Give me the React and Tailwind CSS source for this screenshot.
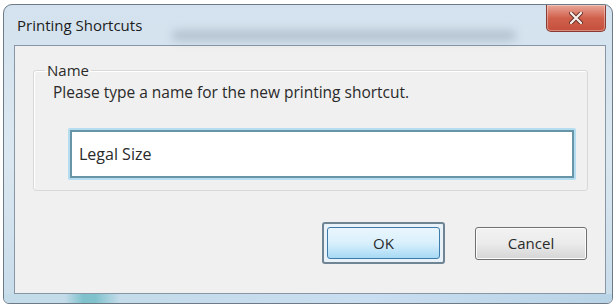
export default function App() {
  return (
    <div className="w-[615px] h-[306px] bg-white pt-[4px] pl-[3px] font-['Open_Sans',sans-serif] text-[#2a2a2a]">
      <div className="w-[610px] h-[300px] rounded-t-[9px] rounded-b-[6px] border border-[#6e7a86] bg-gradient-to-b from-[#d3e2ee] via-[#dce8f1] to-[#c8dcea] flex flex-col overflow-hidden">
        {/* title bar */}
        <div className="h-[40px] flex items-start shrink-0">
          <span className="pl-[13px] pt-[10px] text-[15px] leading-[20px] text-[#1c1c1c]">Printing Shortcuts</span>
          <div className="flex-1 mt-[26px] mx-[30px] h-[9px] rounded-full bg-[#7d8d9b]/45 blur-[5px]" />
          <button className="w-[60px] h-[27px] mr-[6px] rounded-b-[5px] border border-t-0 border-[#8a3a30] bg-gradient-to-b from-[#e8a698] via-[#d0604c] to-[#c4503c] flex items-center justify-center shadow-[inset_0_0_0_1px_rgba(255,255,255,0.35)]">
            <svg width="14" height="12" viewBox="0 0 14 12">
              <path d="M2 1 L12 11 M12 1 L2 11" stroke="#5a2a24" strokeWidth="4" strokeLinecap="round" />
              <path d="M2 1 L12 11 M12 1 L2 11" stroke="#f6ece8" strokeWidth="2.4" strokeLinecap="round" />
            </svg>
          </button>
        </div>

        {/* client area */}
        <div className="h-[249px] ml-[10px] mr-[6px] border border-[#8797a6] bg-[#f0f0f0] flex flex-col shrink-0">
          <fieldset className="ml-[18px] mt-[15px] mr-[17px] h-[130px] border border-[#d8d8d8] rounded-[3px] shadow-[inset_1px_1px_0_#ffffff] px-[19px] min-w-0">
            <legend className="ml-[-8px] px-[2px] text-[15px] leading-[18px]">Name</legend>
            <p className="text-[15.5px] leading-[20px] mt-[3px]">Please type a name for the new printing shortcut.</p>
            <div className="mt-[26px] ml-[15px] mr-[-8px] h-[52px] border-2 border-[#b4def0] rounded-[2px]">
              <div className="h-full border-2 border-[#6794a7] bg-white flex items-center pl-[7px]">
                <span className="text-[16px]">Legal Size</span>
              </div>
            </div>
          </fieldset>

          <div className="mt-[31px] flex justify-end items-center gap-[30px] pr-[18px]">
            <div className="w-[123px] h-[42px] border-2 border-[#6f8593] rounded-[3px] p-[3px] bg-[#e8f2f8]">
              <button className="w-full h-full rounded-[3px] border border-[#3d7bab] bg-gradient-to-b from-[#eaf6fd] via-[#d9f0fc] to-[#a7d9f5] text-[15px] leading-none">
                OK
              </button>
            </div>
            <button className="w-[112px] h-[33px] rounded-[3px] border border-[#707070] bg-gradient-to-b from-[#f2f2f2] via-[#ebebeb] to-[#d5d5d5] text-[15px] leading-none shadow-[inset_0_0_0_1px_#fcfcfc]">
              Cancel
            </button>
          </div>
        </div>

        {/* bottom frame */}
        <div className="flex-1 bg-[linear-gradient(90deg,#c4dbea_0%,#c4dbea_10%,#7fc2cc_13%,#7fc2cc_15%,#c4dbea_19%,#c9def0_60%,#b9d3e6_100%)]" />
      </div>
    </div>
  );
}
